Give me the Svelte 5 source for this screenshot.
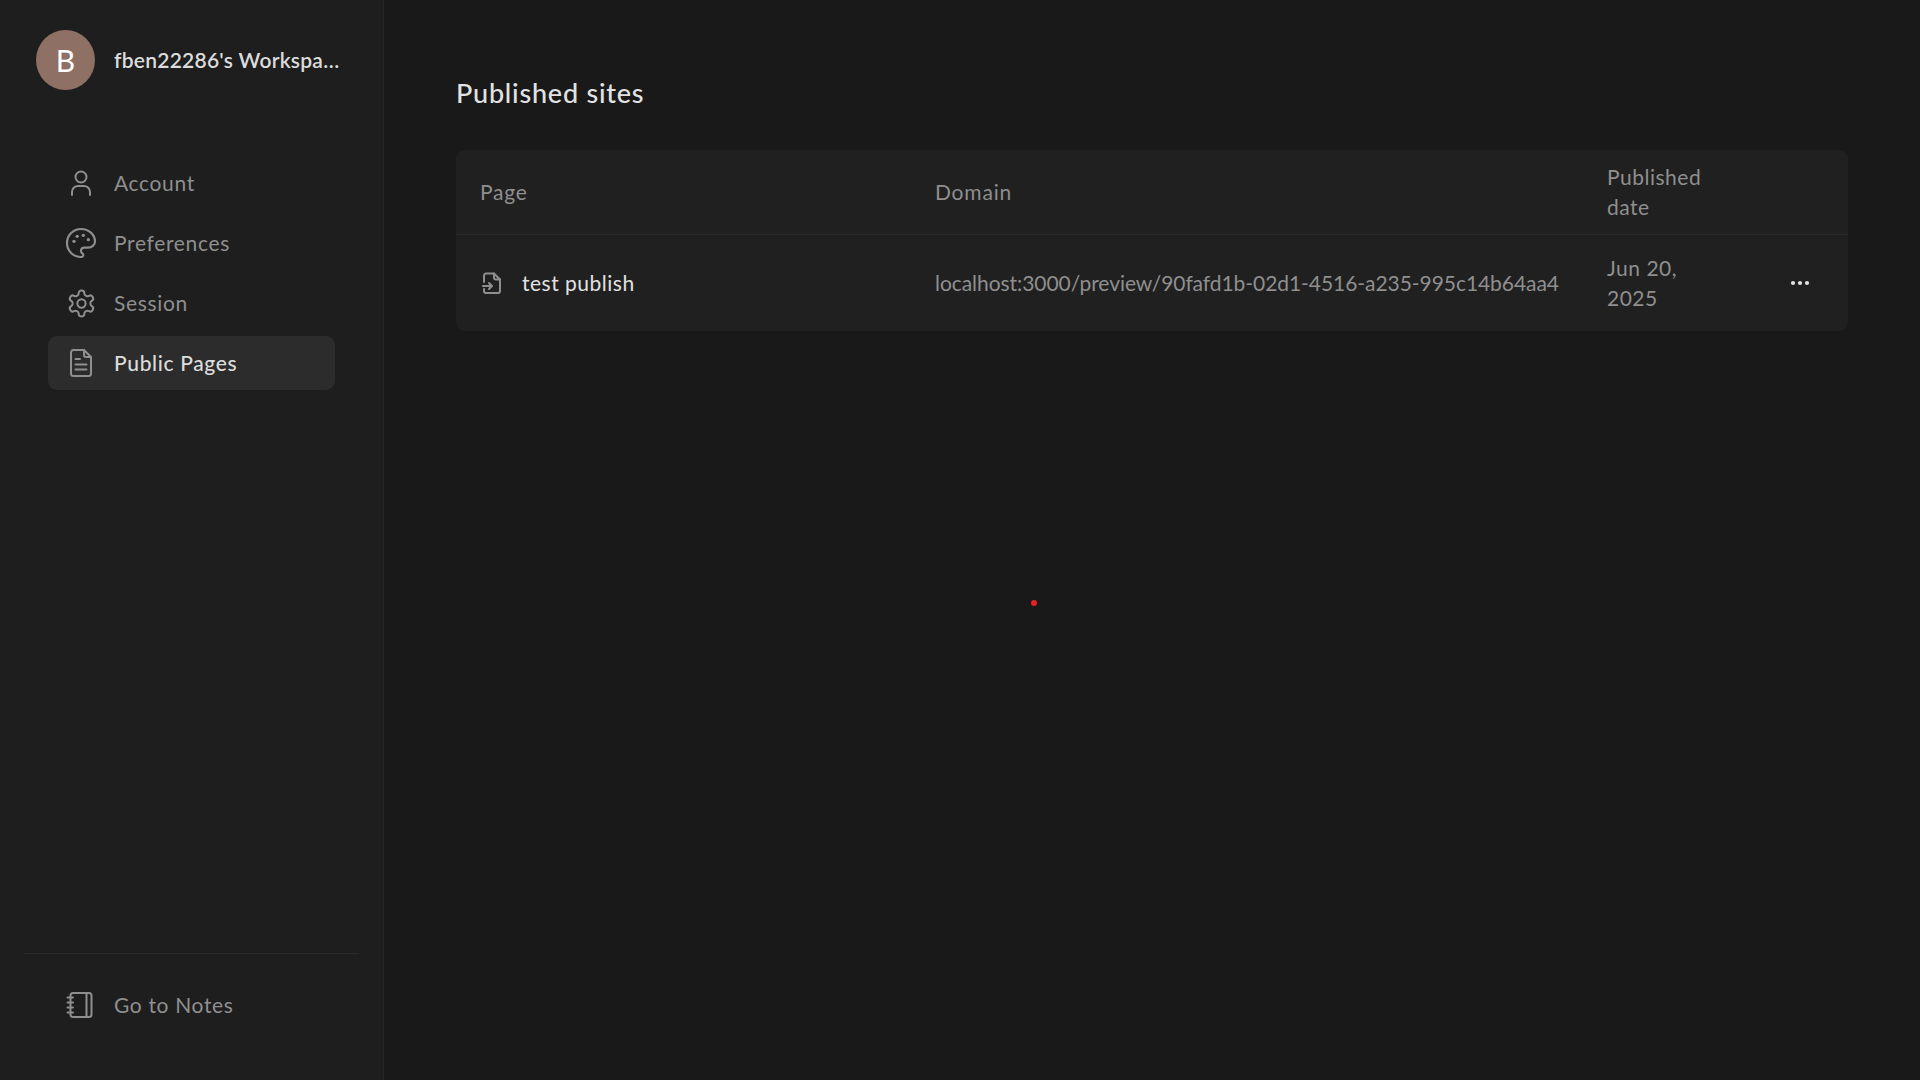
<script lang="ts">
	const sites = [
		{
			page: 'test publish',
			domain: 'localhost:3000/preview/90fafd1b-02d1-4516-a235-995c14b64aa4',
			date: 'Jun 20, 2025'
		}
	];
</script>

<div class="layout">
	<aside class="sidebar">
		<div class="workspace">
			<div class="avatar">B</div>
			<span class="workspace-name">fben22286's Workspace</span>
		</div>

		<nav class="nav">
			<div class="nav-item">
				<svg class="icon" viewBox="0 0 30 30">
					<circle cx="15" cy="9" r="5.5" />
					<path d="M6 27v-3a6 6 0 0 1 6-6h6a6 6 0 0 1 6 6v3" />
				</svg>
				<span>Account</span>
			</div>
			<div class="nav-item">
				<svg class="icon thin" viewBox="3 3 18 18">
					<path d="M12 20.4a8.4 8.4 0 0 1 0-16.8c4.64 0 8.4 3.34 8.4 7.47 0 .99-.44 1.94-1.23 2.64-.79.7-1.86 1.09-2.97 1.09h-2.33a1.87 1.87 0 0 0-.93 3.5 1.21 1.21 0 0 1-.94 2.1" />
					<circle class="dot" cx="7.8" cy="11" r="1" />
					<circle class="dot" cx="9.700" cy="8" r="1" />
					<circle class="dot" cx="13.400" cy="7.400" r="1" />
					<circle class="dot" cx="16.400" cy="10" r="1" />
				</svg>
				<span>Preferences</span>
			</div>
			<div class="nav-item">
				<svg class="icon gear" viewBox="0 0 24 24">
					<path d="M12.22 2h-.44a2 2 0 0 0-2 2v.18a2 2 0 0 1-1 1.73l-.43.25a2 2 0 0 1-2 0l-.15-.08a2 2 0 0 0-2.73.73l-.22.38a2 2 0 0 0 .73 2.73l.15.1a2 2 0 0 1 1 1.72v.51a2 2 0 0 1-1 1.74l-.15.09a2 2 0 0 0-.73 2.73l.22.38a2 2 0 0 0 2.73.73l.15-.08a2 2 0 0 1 2 0l.43.25a2 2 0 0 1 1 1.73V20a2 2 0 0 0 2 2h.44a2 2 0 0 0 2-2v-.18a2 2 0 0 1 1-1.73l.43-.25a2 2 0 0 1 2 0l.15.08a2 2 0 0 0 2.73-.73l.22-.39a2 2 0 0 0-.73-2.73l-.15-.08a2 2 0 0 1-1-1.74v-.5a2 2 0 0 1 1-1.74l.15-.09a2 2 0 0 0 .73-2.73l-.22-.38a2 2 0 0 0-2.73-.73l-.15.08a2 2 0 0 1-2 0l-.43-.25a2 2 0 0 1-1-1.73V4a2 2 0 0 0-2-2z" />
					<circle cx="12" cy="12" r="3.2" />
				</svg>
				<span>Session</span>
			</div>
			<div class="nav-item active">
				<svg class="icon" viewBox="0 0 30 30">
					<path d="M7.5 2H18l7 7v16.5a2.5 2.5 0 0 1-2.500 2.500H7.500A2.500 2.500 0 0 1 5 25.500V4.500A2.500 2.500 0 0 1 7.500 2z" />
					<path d="M18 2v5a2 2 0 0 0 2 2h5M9.500 11H14M9.500 16.500h11M9.500 21.500h11" />
				</svg>
				<span>Public Pages</span>
			</div>
		</nav>

		<div class="sidebar-footer">
			<div class="nav-item">
				<svg class="icon" viewBox="0 0 30 30">
					<rect x="4.500" y="3" width="21" height="24" rx="2.500" />
					<path d="M20.500 3v24M1.500 7.500H7M1.500 12.500H7M1.500 17.500H7M1.500 22.500H7" />
				</svg>
				<span>Go to Notes</span>
			</div>
		</div>
	</aside>

	<main class="main">
		<h1>Published sites</h1>

		<div class="table">
			<div class="row head">
				<div class="cell">Page</div>
				<div class="cell">Domain</div>
				<div class="cell date">Published date</div>
				<div class="cell"></div>
			</div>
			{#each sites as site}
				<div class="row body">
					<div class="cell page">
						<svg class="file-icon" viewBox="0 0 24 24">
							<path d="M4 11V4.500a2 2 0 0 1 2-2h8l6 6V20a2 2 0 0 1-2 2H6a2 2 0 0 1-2-2v-2" />
							<path d="M14 2.500v4a2 2 0 0 0 2 2h4M3 15h9M9 12l3 3-3 3" />
						</svg>
						<span>{site.page}</span>
					</div>
					<div class="cell domain">{site.domain}</div>
					<div class="cell date">{site.date}</div>
					<div class="cell more">
						<svg width="20" height="6" viewBox="0 0 20 6">
							<circle cx="3" cy="3" r="2.100" />
							<circle cx="10" cy="3" r="2.100" />
							<circle cx="17" cy="3" r="2.100" />
						</svg>
					</div>
				</div>
			{/each}
		</div>
	</main>

	<!-- Recording cursor dot -->
	<div class="cursor-dot"></div>
</div>

<style>
	:global(body) {
		margin: 0;
		background: #191919;
	}

	.layout {
		position: relative;
		display: flex;
		height: 100vh;
		overflow: hidden;
		font-family: Lato, "Open Sans", sans-serif;
		font-size: 21px;
		line-height: 30px;
		letter-spacing: 0.5px;
		color: #8f8f8f;
	}

	.sidebar {
		display: flex;
		flex-direction: column;
		flex: none;
		box-sizing: border-box;
		width: 384px;
		padding-top: 30px;
		background: #1e1e1e;
		border-right: 1px solid #262626;
	}

	.workspace {
		display: flex;
		align-items: center;
		gap: 19px;
		padding-left: 36px;
		height: 60px;
	}

	.avatar {
		flex: none;
		display: flex;
		align-items: center;
		justify-content: center;
		width: 59px;
		height: 60px;
		border-radius: 50%;
		background: #8e7064;
		color: #fff;
		font-size: 30px;
		letter-spacing: 0;
	}

	.workspace-name {
		width: 226px;
		overflow: hidden;
		white-space: nowrap;
		text-overflow: ellipsis;
		font-weight: 600;
		letter-spacing: 0.25px;
		color: #dcdcdc;
	}

	.nav {
		display: flex;
		flex-direction: column;
		gap: 6px;
		margin-top: 63px;
		padding: 3px 0 0 48px;
		flex: 1;
	}

	.nav-item {
		display: flex;
		align-items: center;
		gap: 18px;
		box-sizing: border-box;
		width: 287px;
		height: 54px;
		padding-left: 18px;
		border-radius: 9px;
		letter-spacing: 0.65px;
	}

	.nav-item.active {
		background: #2c2c2c;
		color: #dcdcdc;
		font-weight: 500;
	}

	.icon {
		flex: none;
		box-sizing: border-box;
		width: 30px;
		height: 30px;
		fill: none;
		stroke: #8f8f8f;
		stroke-width: 2;
		stroke-linecap: round;
		stroke-linejoin: round;
		overflow: visible;
	}

	.icon.thin {
		stroke-width: 1.300;
	}

	.icon.gear {
		stroke-width: 1.550;
		width: 31px;
		height: 31px;
		margin: 0 -1px 0 0;
	}

	.dot {
		fill: #8f8f8f;
		stroke: none;
	}

	.sidebar-footer {
		margin: 0 24px;
		padding: 24px 0 48px 24px;
		border-top: 1px solid #2a2a2a;
	}

	.main {
		flex: 1;
		min-width: 0;
		padding: 75px 72px 0;
	}

	h1 {
		margin: 0 0 39px;
		font-size: 27px;
		font-weight: 500;
		line-height: 36px;
		letter-spacing: 0.78px;
		color: #e2e2e2;
	}

	.table {
		background: #202020;
		border-radius: 9px;
	}

	.row {
		display: grid;
		grid-template-columns: 455px 672px 1fr 96px;
		align-items: center;
	}

	.row.head {
		padding: 12px 0;
		border-bottom: 1px solid #2a2a2a;
	}

	.row.body {
		padding: 18px 0;
	}

	.cell {
		padding-left: 24px;
	}

	.row.head .cell:not(.date) {
		letter-spacing: 0.8px;
	}

	.cell.domain {
		letter-spacing: -0.06px;
		white-space: nowrap;
	}

	.cell.date {
		padding-right: 45px;
	}

	.cell.page {
		display: flex;
		align-items: center;
		gap: 18px;
		color: #e2e2e2;
	}

	.file-icon {
		flex: none;
		width: 24px;
		height: 24px;
		fill: none;
		stroke: #8f8f8f;
		stroke-width: 2;
		stroke-linecap: round;
		stroke-linejoin: round;
	}

	.cell.more {
		display: flex;
		justify-content: center;
		padding: 0;
		fill: #e2e2e2;
	}

	.cursor-dot {
		position: absolute;
		left: 1031px;
		top: 600px;
		width: 6px;
		height: 6px;
		border-radius: 50%;
		background: #e8202a;
	}
</style>
